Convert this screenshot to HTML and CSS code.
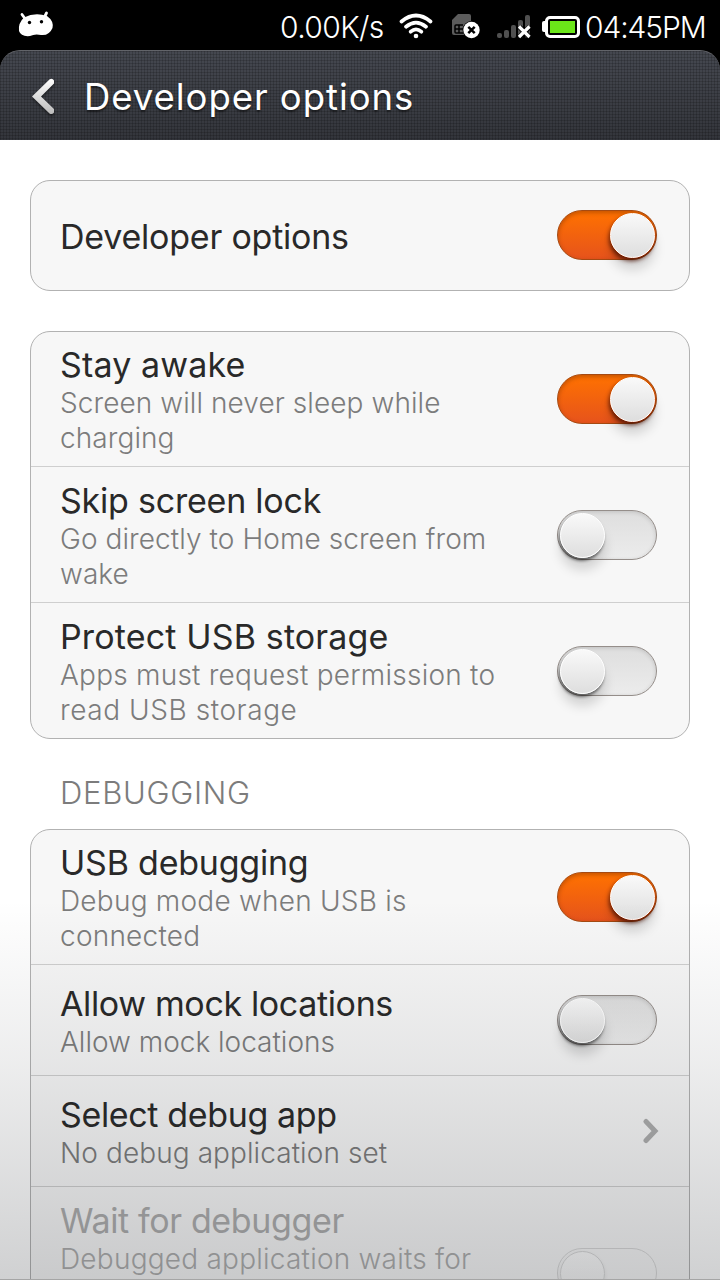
FILE: index.html
```html
<!DOCTYPE html>
<html lang="en">
<head>
<meta charset="utf-8">
<title>Developer options</title>
<link rel="stylesheet" href="styles.css">
</head>
<body>
<div class="screen">
  <div class="status">
    <svg class="android" width="36" height="28" viewBox="0 0 36 28"><path d="M4 3.500L8 9M28.500 2L26.500 6" stroke="#fff" stroke-width="2.800" stroke-linecap="round"/><path d="M6 6.500Q17 1 29 5Q36 10 34.500 17Q31 25 23 24Q17 22.500 12 25Q3 26 1 20Q0 12 6 6.500Z" fill="#fff"/><circle cx="11.500" cy="11.500" r="1.700"/><circle cx="23.500" cy="10.700" r="1.700"/></svg>
    <span class="speed">0.00K/s</span>
    <svg class="wifi" width="34" height="26" viewBox="0 0 34 26" fill="none" stroke="#fff" stroke-width="3.700" stroke-linecap="round"><path d="M2.500 8.500Q17 -3.500 31.500 8.500M7 13.700Q17 5.500 27 13.700M11.700 18.700Q17 14 22.300 18.700"/><circle cx="17" cy="23" r="2.300" fill="#fff" stroke="none"/></svg>
    <svg class="sim" width="30" height="26" viewBox="0 0 30 26"><path d="M1 7L7 1H18Q20 1 20 3V22H3Q1 22 1 20Z" fill="#5c5c5c"/><path d="M12 12H5Q4 12 4 13V19Q4 20 5 20H12M4 16H12M8 12V20" fill="none" stroke="#000" stroke-width="1.500"/><circle cx="20.500" cy="17" r="9" fill="#000"/><circle cx="20.500" cy="17" r="8.200" fill="#fff"/><path d="M17.300 13.800L23.700 20.200M23.700 13.800L17.300 20.200" stroke="#000" stroke-width="2.500"/></svg>
    <svg class="signal" width="34" height="26" viewBox="0 0 34 26"><g fill="#505050"><rect y="19" width="5" height="5" rx="2"/><rect x="7" y="16" width="5" height="8" rx="2"/><rect x="14" y="11" width="5" height="13" rx="2"/><rect x="21" y="6" width="5" height="18" rx="2"/><rect x="28" y="1" width="5" height="23" rx="2"/></g><path d="M22.500 13L32.500 23M32.500 13L22.500 23" stroke="#000" stroke-width="5"/><path d="M22 12.500L32.500 23M32.500 12.500L22 23" stroke="#fff" stroke-width="3.200"/></svg>
    <svg class="battery" width="38" height="24" viewBox="0 0 38 24"><rect y="6" width="6" height="11" rx="2" fill="#fff"/><rect x="4.500" y="2.500" width="32" height="19" rx="3.500" fill="#000" stroke="#fff" stroke-width="3"/><rect x="8" y="6" width="25" height="12" fill="#6be619"/></svg>
    <span class="clock">04:45PM</span>
  </div>
  <header class="bar">
    <svg class="back" width="24" height="38" viewBox="0 0 24 38"><defs><linearGradient id="bg" x2="0" y2="1"><stop stop-color="#fff"/><stop offset="1" stop-color="#bbb"/></linearGradient></defs><path d="M0 18.500L17.700 1.200Q20.500 0 22 2.500V5.500L9 18.500L22 31V34.500Q20 37 17.500 35.500Z" fill="url(#bg)"/></svg>
    <h1>Developer options</h1>
  </header>
  <main>
    <section class="card single">
      <div class="row"><div class="text"><div class="title snug">Developer options</div></div><div class="switch on"><i></i></div></div>
    </section>
    <section class="card">
      <div class="row three"><div class="text"><div class="title open">Stay awake</div><p>Screen will never sleep while<br>charging</p></div><div class="switch on"><i></i></div></div>
      <div class="row three"><div class="text"><div class="title snug">Skip screen lock</div><p>Go directly to Home screen from<br>wake</p></div><div class="switch"><i></i></div></div>
      <div class="row three"><div class="text"><div class="title open">Protect USB storage</div><p><span class="wide">Apps must request permission to</span><br><span class="wider">read USB storage</span></p></div><div class="switch"><i></i></div></div>
    </section>
    <h2>DEBUGGING</h2>
    <section class="card">
      <div class="row three"><div class="text"><div class="title snug">USB debugging</div><p class="wide">Debug mode when USB is<br>connected</p></div><div class="switch on"><i></i></div></div>
      <div class="row two"><div class="text"><div class="title tight">Allow mock locations</div><p class="plain">Allow mock locations</p></div><div class="switch"><i></i></div></div>
      <div class="row two"><div class="text"><div class="title tight">Select debug app</div><p>No debug application set</p></div><svg class="more" width="18" height="26" viewBox="0 0 18 26"><path d="M4 3.500L13 13L4 22.500" fill="none" stroke="#adadad" stroke-width="5" stroke-linecap="round"/></svg></div>
      <div class="row four disabled"><div class="text"><div class="title tight">Wait for debugger</div><p class="wide">Debugged application waits for</p></div><div class="switch"><i></i></div></div>
    </section>
  </main>
  <div class="shade"></div>
</div>
</body>
</html>
```
FILE: styles.css
```css
* { box-sizing: border-box; }
body { margin: 0; background: #fff; font-family: Inter, "Liberation Sans", sans-serif; }
.screen { position: relative; width: 720px; height: 1280px; overflow: hidden; background: linear-gradient(#000 80px, #fff 80px); }
.status { display: flex; align-items: center; height: 50px; padding: 0 0 0 18px; color: #fff; font-size: 30px; font-weight: 300; white-space: nowrap; }
.status svg { flex: none; }
.android { margin-top: -1px; }
.speed { flex: none; width: 104px; margin-left: 226px; padding-top: 3px; letter-spacing: -.6px; }
.wifi { margin: 2px 0 0 15px; }
.sim { margin: 2px 0 0 18px; }
.signal { margin: 3px 0 0 16px; }
.battery { margin: 3px 0 0 11px; }
.clock { flex: none; margin-left: 5px; padding-top: 3px; letter-spacing: -1.1px; }
.bar { display: flex; align-items: center; height: 90px; padding: 2px 32px 0; border-radius: 20px 20px 0 0; border-top: 1px solid #626469; background: repeating-linear-gradient(90deg, rgba(0,0,0,.16) 0 1px, transparent 1px 3px), repeating-linear-gradient(rgba(0,0,0,.16) 0 1px, transparent 1px 3px), linear-gradient(#454850, #33353b); }
.back { flex: none; filter: drop-shadow(0 2px 1px rgba(0,0,0,.4)); }
h1 { margin: 0 0 0 28px; color: #fff; font-size: 36.500px; font-weight: 400; letter-spacing: .95px; text-shadow: 0 2px 2px rgba(0,0,0,.5); white-space: nowrap; }
main { padding: 40px 30px 0; }
.card { border: 1px solid #b2b2b2; border-radius: 20px; background: #f7f7f7; margin-bottom: 40px; }
.row { display: flex; align-items: center; justify-content: space-between; height: 109px; padding: 0 32px 0 29px; }
.row + .row { border-top: 1px solid #cfcfcf; }
.single .row { padding-bottom: 1px; }
.three { height: 135px; }
.three + .three { height: 136px; }
.three:first-child { height: 134px; }
.row.two { height: 111px; }
.row.four { height: 172px; }
.text { padding-top: 2px; }
.title { color: #292929; font-size: 34px; line-height: 41px; white-space: nowrap; }
.title.open { letter-spacing: .15px; }
.title.snug { letter-spacing: -.22px; }
.title.tight { letter-spacing: -.36px; }
p { margin: 0; padding-top: 1px; color: #7c7c7c; font-size: 28px; font-weight: 300; line-height: 35px; letter-spacing: .08px; white-space: nowrap; }
.plain { letter-spacing: 0; }
.wide { letter-spacing: .23px; }
.wider { letter-spacing: .57px; }
h2 { margin: -6px 0 16px 30px; color: #7c7c7c; font-size: 31px; font-weight: 300; line-height: 40px; letter-spacing: .7px; }
.switch { flex: none; width: 100px; height: 50px; padding: 3px 3px 3px 2px; border-radius: 25px; border: 1px solid #958e8a; background: linear-gradient(#dedede, #ececec); box-shadow: inset 0 1px 4px rgba(0,0,0,.14); }
.switch i { display: block; width: 45px; height: 45px; border-radius: 50%; border: 1px solid #fff; background: linear-gradient(#f9f9f9, #dedede); box-shadow: -1px 3px 3px rgba(0,0,0,.5), 0 12px 12px rgba(0,0,0,.15); margin-top: -1px; }
.on { border-color: #a54a12; background: linear-gradient(#ff7200, #e6531c); box-shadow: inset 0 2px 4px rgba(110,40,0,.4); }
.on i { margin-left: 50px; box-shadow: -1px 3px 4px rgba(70,15,0,.8), 0 12px 12px rgba(0,0,0,.15); }
.more { margin-right: -3px; }
.four .text { align-self: flex-start; padding-top: 13px; }
.disabled .title, .disabled p { color: #adadad; }
.disabled .switch { border-color: #d8d8d8; background: #f7f7f7; box-shadow: none; }
.disabled .switch i { border-color: #d8d8d8; background: linear-gradient(#fcfcfc, #f3f3f3); box-shadow: 0 2px 4px rgba(0,0,0,.08); }
.shade { position: absolute; inset: 900px 0 0; background: linear-gradient(rgba(20,24,30,0), rgba(20,24,30,.075) 42%, rgba(20,24,30,.2)); border-bottom: 1px solid #a5a5a5; }
```
